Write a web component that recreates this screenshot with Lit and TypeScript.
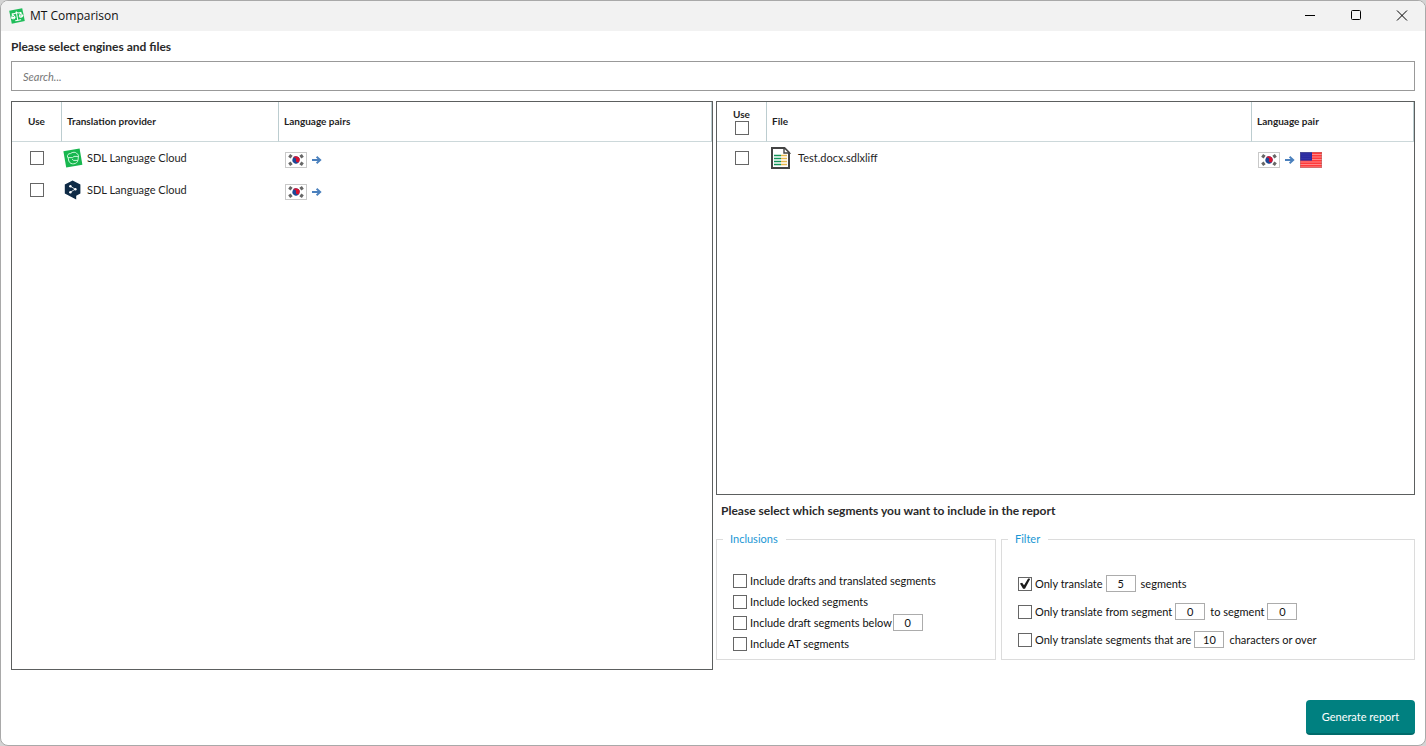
import { LitElement, html, svg, css } from "lit";
import { customElement, property, state } from "lit/decorators.js";

const arrow = html`<svg class="arrow" viewBox="0 0 10 8" width="10" height="8" aria-hidden="true">
  <path d="M0 4H8.4M4.6 0.8L8.2 4 4.6 7.2" fill="none" stroke="#4a80bd" stroke-width="1.9" />
</svg>`;

const trigram = (x: number, y: number, angle: number) => svg`
  <g transform="translate(${x} ${y}) rotate(${angle})">
    <rect x="-1.7" y="-1.5" width="3.4" height="3" fill="#666" />
  </g>`;

const flags = {
  ko: html`<svg viewBox="0 0 22 16" width="22" height="16" role="img" aria-label="Korean">
    <rect x="0.5" y="0.5" width="21" height="15" fill="#fff" stroke="#c9c9c9" />
    <g transform="rotate(20 11 8)">
      <circle cx="11" cy="8" r="3.6" fill="#1c4796" />
      <path d="M7.4 8a3.6 3.6 0 0 1 7.2 0a1.8 1.8 0 0 1-3.6 0a1.8 1.8 0 0 0-3.6 0z" fill="#d8122f" />
    </g>
    ${trigram(5.4, 4.2, -55)} ${trigram(16.6, 4.2, 55)} ${trigram(5.4, 11.8, 55)} ${trigram(16.6, 11.8, -55)}
  </svg>`,
  us: html`<svg viewBox="0 0 22 16" width="22" height="16" role="img" aria-label="English (United States)">
    <rect width="22" height="16" fill="#ff3a3a" />
    <path d="M0 2.5H22M0 5H22M0 7.5H22M0 10H22M0 12.5H22M0 15H22" stroke="#ff9c9c" stroke-width="0.8" />
    <rect width="12" height="8.6" fill="#2a2aa0" />
    <path d="M1.5 2H11M2.5 4.2H11M1.5 6.4H11" stroke="#4a4ab4" stroke-width="0.7" stroke-dasharray="1 1" />
    <rect x="0.5" y="0.5" width="21" height="15" fill="none" stroke="#888" stroke-opacity="0.35" />
  </svg>`,
};

const icons = {
  scales: html`<svg viewBox="0 0 16 16" width="16" height="16" aria-hidden="true">
    <path d="M0.2 2.8L13.2 0.3 15.8 13.1 2.8 15.7z" fill="#1fbd5a" />
    <g fill="none" stroke="#fff" stroke-width="1" stroke-linecap="round" transform="rotate(-10 8 8)">
      <path d="M8 3.6V12M5.8 12.4H11M3.4 5.2H6.4L8 4.2 9.6 5.2H12.6" />
      <path d="M4 5.6L2.4 8.8H5.8zM12 5.4L10.4 8.6H13.8zM2.8 9.6Q4 10.6 5.4 9.6M10.6 9.4Q12 10.4 13.4 9.4" />
    </g>
  </svg>`,
  cloud: html`<svg viewBox="0 0 20 20" width="20" height="20" aria-hidden="true">
    <path d="M0.4 3.2L16.6 0.6 19.4 16.8 3.2 19.5z" fill="#17b74f" />
    <g fill="none" stroke="#c9f5d8" stroke-width="1" stroke-linejoin="round">
      <path d="M4.6 9.6C3.8 6.8 5.6 5.4 7.4 5.6C9.4 3.8 13 3.8 13.8 5.6C15.6 6.2 15.8 8.2 15.2 9.2" />
      <path d="M5 9.6H9.6L11 8.4H15.4L15 12.4H10.4L9.2 11" />
      <path d="M5.2 9.8L5.8 13C6.8 15.6 9 16 10.8 15.8C13 15.6 14.6 14.2 14.8 12.6" />
    </g>
  </svg>`,
  hexagon: html`<svg viewBox="0 0 20 20" width="20" height="20" aria-hidden="true">
    <path d="M9.6 0.6L17.4 4.6V13.4L13.2 15.8V19.6L9.4 17.4 1.8 13.4V4.6z" fill="#0f2b46" />
    <path d="M7.6 6.4L12.2 9.2 7.6 12" fill="none" stroke="#fff" stroke-width="0.8" />
    <g fill="#fff">
      <circle cx="7.4" cy="6.2" r="1.2" /><circle cx="12.4" cy="9.2" r="1.2" /><circle cx="7.4" cy="12.2" r="1.2" />
    </g>
  </svg>`,
  document: html`<svg viewBox="0 0 20 22" width="20" height="22" aria-hidden="true">
    <path d="M1 1H13.4L18 5.6V21H1z" fill="#fff" stroke="#444" stroke-width="2" />
    <path d="M13 0.5V6H18.6z" fill="#fff" stroke="#444" stroke-width="1.4" />
    <path d="M3 8.5H10M3 11.5H10M3 14.5H10M3 17.5H10" stroke="#12945a" stroke-width="1.5" />
    <path d="M10 8.5H16M10 11.5H16M10 14.5H16M10 17.5H16" stroke="#e6b64c" stroke-width="1.5" />
  </svg>`,
};

const controls = css`
  * { box-sizing: border-box; }
  button, input { font: inherit; color: inherit; }
  input[type="checkbox"] {
    appearance: none;
    display: block;
    flex: none;
    width: 14px;
    height: 14px;
    margin: 0;
    border: 1px solid #666;
    background: #fff;
  }
  input[type="checkbox"]:checked::before {
    content: "";
    display: block;
    width: 12px;
    height: 12px;
    background: #1c1c1c;
    clip-path: polygon(8% 50%, 26% 44%, 42% 64%, 76% 8%, 94% 10%, 50% 94%, 34% 94%);
  }
`;

@customElement("segment-option")
class SegmentOption extends LitElement {
  @property({ type: Array }) parts: (string | number)[] = [];
  @property({ type: Boolean }) checked = false;

  static styles = [
    controls,
    css`
      :host { display: flex; align-items: center; gap: 3px; height: 17px; }
      .option { display: flex; align-items: center; gap: 3px; white-space: nowrap; }
      .amount {
        width: 30px;
        height: 17px;
        padding: 0;
        border: 1px solid #acacac;
        background: #fff;
        text-align: center;
      }
      .tail { margin-left: 2px; }
      :host([tight]) { gap: 1px; }
    `,
  ];

  render() {
    const [first, ...rest] = this.parts;
    return html`
      <label class="option"><input type="checkbox" .checked=${this.checked} />${first}</label>
      ${rest.map((part) =>
        typeof part === "number"
          ? html`<input class="amount" type="text" inputmode="numeric" aria-label=${`${first}`} .value=${String(part)} />`
          : html`<span class="tail">${part}</span>`
      )}
    `;
  }
}

@customElement("app-root")
class AppRoot extends LitElement {
  @state() private providers = [
    { name: "SDL Language Cloud", icon: icons.cloud },
    { name: "SDL Language Cloud", icon: icons.hexagon },
  ];

  static styles = [
    controls,
    css`
      :host { display: block; background: #d4d4d4; }
      .window {
        display: flex;
        flex-direction: column;
        min-height: 100vh;
        border: 1px solid #a9a9a9;
        border-radius: 8px;
        background: #fff;
        overflow: hidden;
        font: 11px/16px Lato, "Open Sans", sans-serif;
        color: #1f1f1f;
      }
      .titlebar { display: flex; align-items: center; height: 30px; padding-left: 8px; background: #f2f2f2; }
      .title { flex: 1; margin: 0 0 0 5px; font-family: "Open Sans", sans-serif; font-size: 12px; font-weight: 400; color: #111; }
      .caption { display: grid; place-items: center; width: 46px; height: 30px; padding: 0; border: 0; background: none; }
      .content { display: flex; flex: 1; flex-direction: column; padding: 8px 10px 10px; }
      .heading { margin: 0; font-size: 12px; line-height: 16px; font-weight: 700; color: #2a2a2a; }
      .search {
        width: 100%;
        height: 30px;
        margin: 6px 0 10px;
        padding: 0 11px;
        border: 1px solid #999;
        background: #fff;
      }
      .search::placeholder { font-style: italic; color: #777; opacity: 1; }
      .panes { display: grid; flex: 1; grid-template-columns: 702fr 699fr; gap: 3px; }
      .side { display: flex; flex-direction: column; min-width: 0; }
      .list { flex: 1; border: 1px solid #5c5f5f; }
      .table { width: 100%; border-collapse: separate; border-spacing: 0; table-layout: fixed; }
      .table th {
        height: 40px;
        padding: 0 5px 2px;
        border-right: 1px solid #bccdd0;
        border-bottom: 1px solid #ccd8da;
        font-size: 10px;
        line-height: 14px;
        text-align: left;
      }
      .table .use { width: 50px; padding: 0 0 2px; text-align: center; }
      .table td.use { padding: 0; }
      .table .use input { margin: 0 auto; }
      .provider { width: 217px; }
      .pair { width: 162px; }
      .table td { height: 32px; padding: 0 1px; }
      .named { display: flex; align-items: center; gap: 4px; }
      .file { gap: 7px; padding-left: 3px; }
      .languages { display: flex; align-items: center; gap: 4px; padding: 4px 0 0 5px; }
      .arrow { margin: 0 1px; }
      .segments { margin: 8px 0 12px 5px; }
      .groups { display: grid; grid-template-columns: 280fr 414fr; gap: 5px; margin-bottom: 10px; }
      .group {
        display: flex;
        flex-direction: column;
        min-width: 0;
        height: 129px;
        margin: 0;
        padding: 25px 16px 0;
        border: 1px solid #dcdcdc;
        color: #111;
      }
      .group legend { margin-left: -10px; padding: 0 8px 0 7px; color: #1a98d5; }
      .inclusions { gap: 4px; }
      .filter { gap: 11px; padding-top: 28px; }
      .footer { display: flex; justify-content: flex-end; padding-top: 30px; }
      .generate {
        min-width: 109px;
        height: 35px;
        padding: 0 15px;
        border: 0;
        border-bottom: 2px solid #006b6b;
        border-radius: 4px;
        background: #008080;
        color: #fff;
      }
    `,
  ];

  render() {
    return html`
      <div class="window">
        <header class="titlebar">
          ${icons.scales}
          <h1 class="title">MT Comparison</h1>
          <button class="caption" aria-label="Minimize">
            <svg width="12" height="12" viewBox="0 0 12 12"><path d="M1 5.5H11" stroke="#000" /></svg>
          </button>
          <button class="caption" aria-label="Maximize">
            <svg width="12" height="12" viewBox="0 0 12 12"><rect x="1.5" y="0.5" width="9" height="9" rx="1" fill="none" stroke="#000" /></svg>
          </button>
          <button class="caption" aria-label="Close">
            <svg width="12" height="12" viewBox="0 0 12 12"><path d="M1 0.5L11 10.5M11 0.5L1 10.5" stroke="#000" /></svg>
          </button>
        </header>
        <main class="content">
          <h2 class="heading">Please select engines and files</h2>
          <input class="search" type="text" placeholder="Search..." aria-label="Search" />
          <div class="panes">
            <div class="list">
              <table class="table">
                <thead>
                  <tr>
                    <th class="use">Use</th>
                    <th class="provider">Translation provider</th>
                    <th>Language pairs</th>
                  </tr>
                </thead>
                <tbody>
                  ${this.providers.map(
                    (p) => html`<tr>
                      <td class="use"><input type="checkbox" aria-label="Use ${p.name}" /></td>
                      <td><div class="named">${p.icon}${p.name}</div></td>
                      <td><div class="languages">${flags.ko}${arrow}</div></td>
                    </tr>`
                  )}
                </tbody>
              </table>
            </div>
            <div class="side">
              <div class="list">
                <table class="table">
                  <thead>
                    <tr>
                      <th class="use"><label>Use<input type="checkbox" /></label></th>
                      <th>File</th>
                      <th class="pair">Language pair</th>
                    </tr>
                  </thead>
                  <tbody>
                    <tr>
                      <td class="use"><input type="checkbox" aria-label="Use Test.docx.sdlxliff" /></td>
                      <td><div class="named file">${icons.document}Test.docx.sdlxliff</div></td>
                      <td><div class="languages">${flags.ko}${arrow}${flags.us}</div></td>
                    </tr>
                  </tbody>
                </table>
              </div>
              <h2 class="heading segments">Please select which segments you want to include in the report</h2>
              <div class="groups">
                <fieldset class="group inclusions">
                  <legend>Inclusions</legend>
                  <segment-option .parts=${["Include drafts and translated segments"]}></segment-option>
                  <segment-option .parts=${["Include locked segments"]}></segment-option>
                  <segment-option tight .parts=${["Include draft segments below", 0]}></segment-option>
                  <segment-option .parts=${["Include AT segments"]}></segment-option>
                </fieldset>
                <fieldset class="group filter">
                  <legend>Filter</legend>
                  <segment-option checked .parts=${["Only translate", 5, "segments"]}></segment-option>
                  <segment-option .parts=${["Only translate from segment", 0, "to segment", 0]}></segment-option>
                  <segment-option .parts=${["Only translate segments that are", 10, "characters or over"]}></segment-option>
                </fieldset>
              </div>
            </div>
          </div>
          <footer class="footer"><button class="generate">Generate report</button></footer>
        </main>
      </div>
    `;
  }
}
